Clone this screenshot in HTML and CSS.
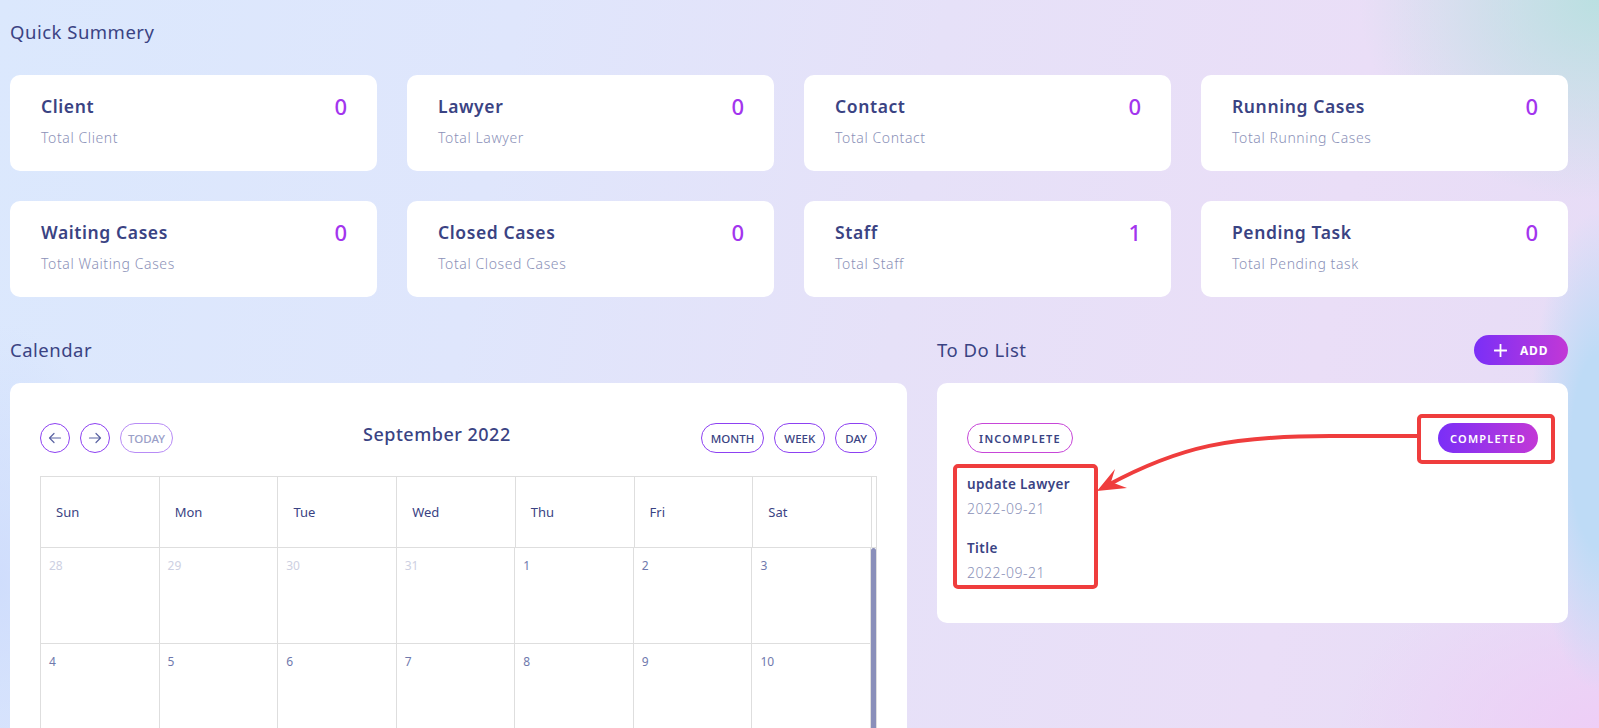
FILE: index.html
```html
<!DOCTYPE html>
<html lang="en">
<head>
<meta charset="utf-8">
<title>Dashboard</title>
<link rel="stylesheet" href="styles.css">
</head>
<body>
<div class="page">
  <section class="summary">
    <h2 class="section-title summary-title">Quick Summery</h2>
    <div class="stats">
      <div class="stat-card"><div class="stat-top"><span class="stat-name">Client</span><span class="stat-value">0</span></div><div class="stat-sub">Total Client</div></div>
      <div class="stat-card"><div class="stat-top"><span class="stat-name">Lawyer</span><span class="stat-value">0</span></div><div class="stat-sub">Total Lawyer</div></div>
      <div class="stat-card"><div class="stat-top"><span class="stat-name">Contact</span><span class="stat-value">0</span></div><div class="stat-sub">Total Contact</div></div>
      <div class="stat-card"><div class="stat-top"><span class="stat-name">Running Cases</span><span class="stat-value">0</span></div><div class="stat-sub">Total Running Cases</div></div>
      <div class="stat-card"><div class="stat-top"><span class="stat-name">Waiting Cases</span><span class="stat-value">0</span></div><div class="stat-sub">Total Waiting Cases</div></div>
      <div class="stat-card"><div class="stat-top"><span class="stat-name">Closed Cases</span><span class="stat-value">0</span></div><div class="stat-sub">Total Closed Cases</div></div>
      <div class="stat-card"><div class="stat-top"><span class="stat-name">Staff</span><span class="stat-value">1</span></div><div class="stat-sub">Total Staff</div></div>
      <div class="stat-card"><div class="stat-top"><span class="stat-name">Pending Task</span><span class="stat-value">0</span></div><div class="stat-sub">Total Pending task</div></div>
    </div>
  </section>

  <div class="bottom">
    <section class="calendar-col">
      <div class="section-head"><h2 class="section-title">Calendar</h2></div>
      <div class="card calendar-card">
        <div class="cal-toolbar">
          <div class="cal-group">
            <button class="circle-btn" aria-label="prev">
              <svg width="14" height="14" viewBox="0 0 14 14"><path d="M12.5 7H1.5M6 2.5L1.5 7L6 11.5" fill="none" stroke="#5b64a3" stroke-width="1.2" stroke-linecap="round" stroke-linejoin="round"/></svg>
            </button>
            <button class="circle-btn" aria-label="next">
              <svg width="14" height="14" viewBox="0 0 14 14"><path d="M1.5 7H12.5M8 2.5L12.5 7L8 11.5" fill="none" stroke="#5b64a3" stroke-width="1.2" stroke-linecap="round" stroke-linejoin="round"/></svg>
            </button>
            <button class="pill-btn pill-disabled">TODAY</button>
          </div>
          <h3 class="cal-title">September 2022</h3>
          <div class="cal-group">
            <button class="pill-btn">MONTH</button>
            <button class="pill-btn">WEEK</button>
            <button class="pill-btn">DAY</button>
          </div>
        </div>
        <div class="cal-table">
          <div class="cal-head">
            <div class="cal-hcell">Sun</div><div class="cal-hcell">Mon</div><div class="cal-hcell">Tue</div><div class="cal-hcell">Wed</div><div class="cal-hcell">Thu</div><div class="cal-hcell">Fri</div><div class="cal-hcell">Sat</div><div class="cal-gutter"></div>
          </div>
          <div class="cal-body">
            <div class="cal-grid">
              <div class="cal-cell other">28</div><div class="cal-cell other">29</div><div class="cal-cell other">30</div><div class="cal-cell other">31</div><div class="cal-cell">1</div><div class="cal-cell">2</div><div class="cal-cell">3</div>
              <div class="cal-cell">4</div><div class="cal-cell">5</div><div class="cal-cell">6</div><div class="cal-cell">7</div><div class="cal-cell">8</div><div class="cal-cell">9</div><div class="cal-cell">10</div>
            </div>
            <div class="cal-scroll"><div class="cal-thumb"></div></div>
          </div>
        </div>
      </div>
    </section>

    <section class="todo-col">
      <div class="section-head">
        <h2 class="section-title">To Do List</h2>
        <button class="btn-add">
          <svg width="13" height="13" viewBox="0 0 13 13"><path d="M6.5 0.5V12.5M0.5 6.5H12.5" stroke="#fff" stroke-width="1.8" stroke-linecap="round"/></svg>
          <span>ADD</span>
        </button>
      </div>
      <div class="card todo-card">
        <div class="todo-tabs">
          <button class="tab tab-outline">INCOMPLETE</button>
          <button class="tab tab-filled">COMPLETED</button>
        </div>
        <ul class="todo-list">
          <li class="todo-item"><div class="todo-name">update Lawyer</div><div class="todo-date">2022-09-21</div></li>
          <li class="todo-item"><div class="todo-name">Title</div><div class="todo-date">2022-09-21</div></li>
        </ul>
      </div>
    </section>
  </div>

  <svg class="annotations" width="1599" height="728" viewBox="0 0 1599 728">
    <rect x="1419" y="416" width="134" height="46" rx="3" fill="none" stroke="#ef3d3d" stroke-width="4"/>
    <rect x="955" y="466" width="141" height="121" rx="3" fill="none" stroke="#ef3d3d" stroke-width="4"/>
    <path d="M1417 436 L1330 436 C1232 436 1180 446 1108 485" fill="none" stroke="#ef3d3d" stroke-width="4"/>
    <polygon points="1097,491 1115,469 1111,482 1127,488" fill="#ef3d3d"/>
  </svg>
</div>
</body>
</html>
```
FILE: styles.css
```css
* { box-sizing: border-box; }

html, body {
  margin: 0;
  height: 728px;
  overflow: hidden;
}

body {
  font-family: "Noto Sans", "Open Sans", Arial, sans-serif;
  color: #3a4383;
  background:
    radial-gradient(ellipse 240px 200px at 100% 0%, rgba(184, 224, 224, 0.95), rgba(184, 224, 224, 0) 100%),
    radial-gradient(ellipse 70px 240px at 100% 62%, rgba(190, 219, 246, 1) 40%, rgba(190, 219, 246, 0) 100%),
    radial-gradient(ellipse 260px 160px at 100% 100%, rgba(238, 206, 246, 1), rgba(238, 206, 246, 0) 100%),
    radial-gradient(ellipse 120px 260px at 0% 80%, rgba(206, 220, 252, 0.9), rgba(206, 220, 252, 0) 100%),
    linear-gradient(100deg, #dbe8fd 0%, #dfe6fc 30%, #e6e1f8 55%, #eadef7 80%, #e6dcf6 100%);
}

.page {
  position: relative;
  width: 1599px;
  height: 728px;
  padding: 0 31px 0 10px;
}

.section-title {
  margin: 0;
  font-size: 18.5px;
  font-weight: 400;
  line-height: 24px;
  letter-spacing: 0.5px;
  color: #3a4383;
}

.summary-title {
  padding-top: 20px;
}

.stats {
  margin-top: 31px;
  display: grid;
  grid-template-columns: repeat(4, 367px);
  column-gap: 30px;
  row-gap: 30px;
}

.stat-card {
  height: 96px;
  background: #fff;
  border-radius: 10px;
  padding: 19px 30px 0 31px;
}

.stat-top {
  display: flex;
  justify-content: space-between;
  align-items: center;
  height: 24px;
}

.stat-name {
  font-size: 17.5px;
  font-weight: 600;
  letter-spacing: 0.6px;
  color: #3a4383;
}

.stat-value {
  font-size: 22px;
  font-weight: 500;
  color: #a335ee;
}

.stat-sub {
  margin-top: 9px;
  font-size: 14px;
  line-height: 21px;
  font-weight: 300;
  letter-spacing: 0.6px;
  color: #8b91b8;
}

.bottom {
  margin-top: 38px;
  display: grid;
  grid-template-columns: 897px 631px;
  column-gap: 30px;
  align-items: start;
}

.section-head {
  height: 30px;
  display: flex;
  align-items: center;
  justify-content: space-between;
}

.card {
  background: #fff;
  border-radius: 10px;
  margin-top: 18px;
}

/* Calendar */
.calendar-card {
  padding: 40px 30px 30px;
}

.cal-toolbar {
  display: flex;
  justify-content: space-between;
  align-items: center;
  height: 30px;
}

.cal-group {
  display: flex;
  gap: 10px;
}

button {
  font-family: inherit;
  cursor: pointer;
}

.circle-btn {
  width: 30px;
  height: 30px;
  border-radius: 50%;
  border: 1px solid #8d41f2;
  background: #fff;
  padding: 0;
  display: flex;
  align-items: center;
  justify-content: center;
}

.pill-btn {
  height: 30px;
  border-radius: 15px;
  border: 1px solid #8d41f2;
  background: #fff;
  padding: 0 9px;
  font-size: 11.5px;
  font-weight: 500;
  color: #3a4383;
}

.pill-disabled {
  border-color: #b88cf6;
  color: #9aa0c8;
  padding: 0 7px;
}

.cal-title {
  margin: -8px 0 0;
  font-size: 18px;
  font-weight: 500;
  line-height: 24px;
  letter-spacing: 0.5px;
  color: #3a4383;
}

.cal-table {
  margin-top: 23px;
  border: 1px solid #dedede;
}

.cal-head {
  display: grid;
  grid-template-columns: repeat(7, 1fr) 4px;
  height: 71px;
  border-bottom: 1px solid #dedede;
}

.cal-hcell {
  border-right: 1px solid #dedede;
  display: flex;
  align-items: center;
  padding-left: 15px;
  font-size: 13px;
  color: #3a4383;
}

.cal-body {
  display: grid;
  grid-template-columns: 1fr 5px;
}

.cal-grid {
  display: grid;
  grid-template-columns: repeat(7, 1fr);
  grid-auto-rows: 96px;
}

.cal-scroll {
  background: #fff;
}

.cal-thumb {
  width: 5px;
  height: 300px;
  border-radius: 3px;
  background: #8a8fba;
}

.cal-cell {
  border-right: 1px solid #dedede;
  border-bottom: 1px solid #dedede;
  padding: 10px 0 0 8px;
  font-size: 12px;
  line-height: 16px;
  color: #6f79ad;
}

.cal-cell.other {
  color: #cdd0e2;
}

/* To do */
.btn-add {
  height: 30px;
  width: 94px;
  border: none;
  border-radius: 15px;
  background: linear-gradient(90deg, #7a2ff7 0%, #c238d6 100%);
  color: #fff;
  display: flex;
  align-items: center;
  gap: 13px;
  padding: 0 0 0 20px;
  font-size: 12px;
  font-weight: 700;
  letter-spacing: 0.8px;
}

.todo-card {
  padding: 40px 30px 40px;
}

.todo-tabs {
  display: flex;
  justify-content: space-between;
  align-items: center;
}

.tab {
  height: 30px;
  border-radius: 15px;
  font-size: 11px;
  font-weight: 600;
  letter-spacing: 1.2px;
  padding: 0 10px;
}

.tab-outline {
  width: 106px;
  background: #fff;
  border: 1px solid #c746d8;
  color: #3a4383;
}

.tab-filled {
  width: 100px;
  border: none;
  background: linear-gradient(90deg, #7a2ff7 0%, #c238d6 100%);
  color: #fff;
}

.todo-list {
  list-style: none;
  margin: 21px 0 0;
  padding: 0;
}

.todo-item + .todo-item {
  margin-top: 19px;
}

.todo-name {
  font-size: 13.5px;
  font-weight: 600;
  line-height: 20px;
  letter-spacing: 0.4px;
  color: #3a4383;
}

.todo-date {
  margin-top: 5px;
  font-size: 14px;
  line-height: 20px;
  font-weight: 300;
  letter-spacing: 0.5px;
  color: #8b91b8;
}

.annotations {
  position: absolute;
  left: 0;
  top: 0;
  pointer-events: none;
}
```
